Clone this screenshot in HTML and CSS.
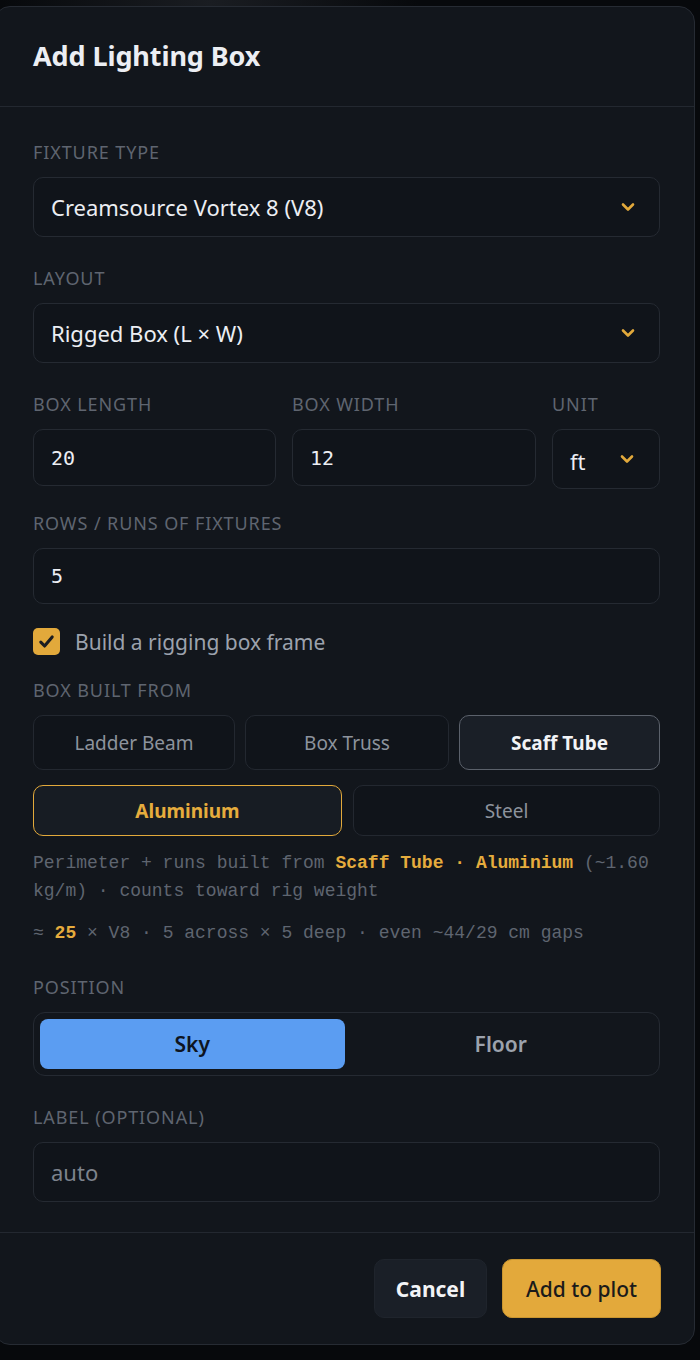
FILE: index.html
```html
<!DOCTYPE html>
<html lang="en">
<head>
<meta charset="utf-8">
<title>Add Lighting Box</title>
<link rel="stylesheet" href="styles.css">
</head>
<body>
<div class="backdrop">
  <div class="modal">
    <header class="modal-head">
      <h1 class="title">Add Lighting Box</h1>
    </header>
    <div class="modal-body">
      <div class="field">
        <div class="label">Fixture type</div>
        <div class="select">
          <span>Creamsource Vortex 8 (V8)</span>
          <svg class="chev" viewBox="0 0 18 18" width="18" height="18"><path d="M4 6.5l5 5 5-5" fill="none" stroke="#e2a93b" stroke-width="2.6" stroke-linecap="round" stroke-linejoin="round"/></svg>
        </div>
      </div>
      <div class="field">
        <div class="label">Layout</div>
        <div class="select">
          <span>Rigged Box (L × W)</span>
          <svg class="chev" viewBox="0 0 18 18" width="18" height="18"><path d="M4 6.5l5 5 5-5" fill="none" stroke="#e2a93b" stroke-width="2.6" stroke-linecap="round" stroke-linejoin="round"/></svg>
        </div>
      </div>
      <div class="grid3">
        <div class="cell">
          <div class="label">Box length</div>
          <div class="input mono">20</div>
        </div>
        <div class="cell">
          <div class="label">Box width</div>
          <div class="input mono">12</div>
        </div>
        <div class="cell">
          <div class="label">Unit</div>
          <div class="select unit">
            <span>ft</span>
            <svg class="chev" viewBox="0 0 18 18" width="18" height="18"><path d="M4 6.5l5 5 5-5" fill="none" stroke="#e2a93b" stroke-width="2.6" stroke-linecap="round" stroke-linejoin="round"/></svg>
          </div>
        </div>
      </div>
      <div class="field rows">
        <div class="label">Rows / runs of fixtures</div>
        <div class="input mono">5</div>
      </div>
      <label class="check">
        <span class="box"><svg viewBox="0 0 16 16" width="19" height="19"><path d="M3.2 8.6l3.2 3.2 6.4-7.6" fill="none" stroke="#1b1d21" stroke-width="2.6" stroke-linecap="round" stroke-linejoin="round"/></svg></span>
        <span class="check-text">Build a rigging box frame</span>
      </label>
      <div class="field built">
        <div class="label">Box built from</div>
        <div class="opts3">
          <div class="opt">Ladder Beam</div>
          <div class="opt">Box Truss</div>
          <div class="opt sel">Scaff Tube</div>
        </div>
        <div class="opts2">
          <div class="opt mat gold">Aluminium</div>
          <div class="opt mat">Steel</div>
        </div>
      </div>
      <p class="note">Perimeter + runs built from <b>Scaff Tube · Aluminium</b> (~1.60 kg/m) · counts toward rig weight</p>
      <p class="note summary">≈ <b>25</b> × V8 · 5 across × 5 deep · even ~44/29 cm gaps</p>
      <div class="field">
        <div class="label">Position</div>
        <div class="seg">
          <div class="seg-btn on">Sky</div>
          <div class="seg-btn">Floor</div>
        </div>
      </div>
      <div class="field">
        <div class="label">Label (optional)</div>
        <div class="input placeholder">auto</div>
      </div>
    </div>
    <footer class="modal-foot">
      <button class="btn cancel">Cancel</button>
      <button class="btn primary">Add to plot</button>
    </footer>
  </div>
</div>
</body>
</html>
```
FILE: styles.css
```css
* { box-sizing: border-box; }
html, body {
  margin: 0;
  padding: 0;
  background: #07090c;
  font-family: "Noto Sans", "Open Sans", sans-serif;
  overflow: hidden;
}
.backdrop {
  width: 700px;
  height: 1360px;
  padding-top: 6px;
  background: radial-gradient(ellipse at 30% 0%, #1a1d22 0%, #07090c 30%), #07090c;
}
.modal {
  margin-left: -6px;
  width: 701px;
  height: 1339px;
  background: #12161c;
  border: 1px solid #262b33;
  border-radius: 16px;
  display: flex;
  flex-direction: column;
}
.modal-head {
  height: 100px;
  flex: none;
  border-bottom: 1px solid #232830;
  padding-left: 38px;
  display: flex;
  align-items: center;
}
.title {
  margin: 0;
  font-size: 27px;
  font-weight: 700;
  color: #eceef3;
  letter-spacing: -0.1px;
  padding-bottom: 2px;
}
.modal-body {
  padding: 33px 34px 0 38px;
  flex: 1;
}
.field { margin-bottom: 29px; }
.label {
  font-size: 18px;
  color: #5f6570;
  text-transform: uppercase;
  letter-spacing: 0.9px;
  line-height: 24px;
  height: 24px;
  margin-bottom: 13px;
  white-space: nowrap;
}
.select, .input {
  height: 60px;
  border: 1px solid #252a32;
  border-radius: 10px;
  background: #10141a;
  display: flex;
  align-items: center;
  padding: 0 22px 0 17px;
  font-size: 22px;
  color: #eceef3;
}
.select { justify-content: space-between; }
.chev { flex: none; }
.input { height: 57px; }
.mono {
  font-family: "DejaVu Sans Mono", "Liberation Mono", monospace;
  font-size: 20px;
}
.placeholder { color: #7d838d; height: 60px; }
.grid3 {
  display: grid;
  grid-template-columns: 243px 244px 1fr;
  gap: 16px;
  margin-bottom: 22px;
}
.grid3 .input { height: 57px; }
.unit { height: 60px; padding-right: 23px; }
.unit span { padding-top: 4px; }
.rows { margin-bottom: 24px; }
.rows .input { height: 56px; }
.check {
  display: flex;
  align-items: center;
  gap: 15px;
  height: 27px;
  margin-bottom: 23px;
}
.box {
  width: 27px;
  height: 27px;
  border-radius: 5px;
  background: #e2a93b;
  display: flex;
  align-items: center;
  justify-content: center;
}
.check-text { font-size: 21px; color: #9ca2ad; }
.built { margin-bottom: 13px; }
.opts3 {
  display: grid;
  grid-template-columns: 202px 204px 1fr;
  gap: 10px;
  margin-bottom: 15px;
}
.opts2 {
  display: grid;
  grid-template-columns: 309px 1fr;
  gap: 11px;
}
.opt {
  height: 55px;
  border: 1px solid #232830;
  border-radius: 10px;
  background: #10141a;
  display: flex;
  align-items: center;
  justify-content: center;
  font-size: 19px;
  color: #8d939d;
}
.opt.sel {
  background: #1a1f27;
  border: 1.5px solid #5b616b;
  color: #f2f3f6;
  font-weight: 700;
}
.mat { height: 51px; }
.mat.gold {
  border: 1.5px solid #e2a93b;
  background: #171c23;
  color: #e6ac3d;
  font-weight: 700;
}
.note {
  margin: 0 0 14px;
  font-family: "Liberation Mono", "DejaVu Sans Mono", monospace;
  font-size: 18px;
  line-height: 28px;
  color: #5f6570;
}
.note b { color: #e6ac3d; font-weight: 700; }
.summary { margin-bottom: 28px; }
.seg {
  height: 64px;
  border: 1px solid #252a32;
  border-radius: 12px;
  padding: 6px;
  display: grid;
  grid-template-columns: 1fr 1fr;
  gap: 4px;
}
.seg-btn {
  border-radius: 8px;
  display: flex;
  align-items: center;
  justify-content: center;
  font-size: 21px;
  font-weight: 600;
  color: #9ca2ad;
}
.seg-btn.on { background: #5b9df2; color: #0e1420; }
.modal-foot {
  height: 112px;
  flex: none;
  border-top: 1px solid #232830;
  display: flex;
  justify-content: flex-end;
  align-items: flex-start;
  gap: 15px;
  padding: 26px 33px 0 0;
}
.btn {
  height: 59px;
  border-radius: 10px;
  font-family: "Noto Sans", "Open Sans", sans-serif;
  font-size: 21px;
  padding: 0;
  white-space: nowrap;
  cursor: pointer;
}
.cancel {
  background: #1a1f27;
  border: 1px solid #1f242c;
  color: #f2f3f6;
  font-weight: 700;
  width: 113px;
}
.primary {
  background: #e3a93b;
  border: 1px solid #c99530;
  color: #1a1a1a;
  font-weight: 500;
  width: 159px;
}
```
